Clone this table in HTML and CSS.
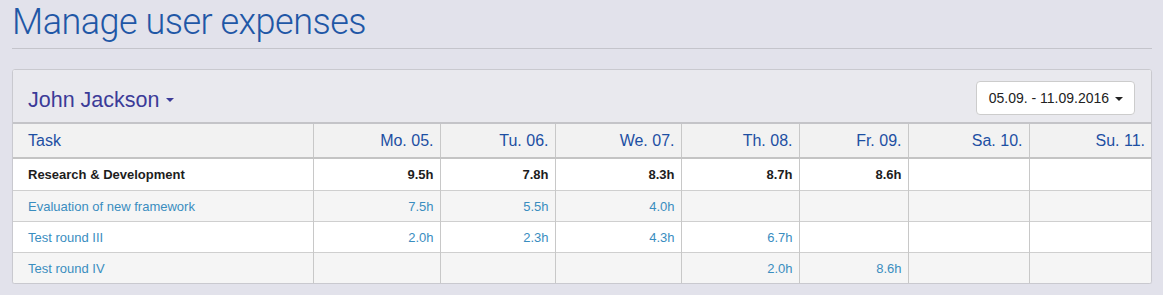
FILE: index.html
```html
<!DOCTYPE html>
<html>
<head>
<meta charset="utf-8">
<link rel="stylesheet" href="styles.css">
</head>
<body>
<div class="page">
  <h1 class="title">Manage user expenses</h1>
  <div class="panel">
    <div class="panel-head">
      <div class="user">John Jackson <span class="caret"></span></div>
      <button class="range">05.09. - 11.09.2016 <span class="caret small"></span></button>
    </div>
    <table class="grid">
      <colgroup>
        <col style="width:300px"><col style="width:127px"><col style="width:115px"><col style="width:126px"><col style="width:118px"><col style="width:109px"><col style="width:121px"><col>
      </colgroup>
      <thead>
        <tr><th class="task">Task</th><th>Mo. 05.</th><th>Tu. 06.</th><th>We. 07.</th><th>Th. 08.</th><th>Fr. 09.</th><th>Sa. 10.</th><th>Su. 11.</th></tr>
      </thead>
      <tbody>
        <tr class="sum"><td class="task">Research &amp; Development</td><td>9.5h</td><td>7.8h</td><td>8.3h</td><td>8.7h</td><td>8.6h</td><td></td><td></td></tr>
        <tr class="alt"><td class="task"><a>Evaluation of new framework</a></td><td><a>7.5h</a></td><td><a>5.5h</a></td><td><a>4.0h</a></td><td></td><td></td><td></td><td></td></tr>
        <tr><td class="task"><a>Test round III</a></td><td><a>2.0h</a></td><td><a>2.3h</a></td><td><a>4.3h</a></td><td><a>6.7h</a></td><td></td><td></td><td></td></tr>
        <tr class="alt"><td class="task"><a>Test round IV</a></td><td></td><td></td><td></td><td><a>2.0h</a></td><td><a>8.6h</a></td><td></td><td></td></tr>
      </tbody>
    </table>
  </div>
</div>
</body>
</html>
```

FILE: styles.css
```css
html, body {
  margin: 0;
  padding: 0;
  background: #e2e2eb;
  font-family: "Liberation Sans", Arial, sans-serif;
}
.page {
  padding: 0 11px 0 12px;
}
.title {
  margin: 0;
  padding: 4px 0 7px 0;
  font-family: Roboto, "Liberation Sans", sans-serif;
  font-weight: 300;
  font-size: 36px;
  line-height: 37px;
  letter-spacing: -0.5px;
  color: #1f57a6;
  border-bottom: 1px solid #c4c4cb;
}
.panel {
  margin-top: 20px;
  background: #fff;
  border: 1px solid #c9c9cf;
  border-radius: 3px;
  overflow: hidden;
  box-shadow: 0 1px 1px rgba(0,0,0,0.05);
}
.panel-head {
  display: flex;
  align-items: center;
  justify-content: space-between;
  height: 52px;
  padding: 0 16px 0 15px;
  background: #e9e9ee;
  border-bottom: 2px solid #c4c4c8;
}
.user {
  font-size: 21.5px;
  color: #3b3b98;
  display: flex;
  align-items: center;
  gap: 7px;
  margin-top: 8px;
}
.caret {
  display: inline-block;
  width: 0;
  height: 0;
  border-left: 4px solid transparent;
  border-right: 4px solid transparent;
  border-top: 4px solid #3b3b98;
}
.caret.small {
  border-top-color: #222;
  margin-left: 2px;
  vertical-align: middle;
}
.range {
  background: #fff;
  border: 1px solid #ccc;
  border-radius: 4px;
  height: 34px;
  padding: 0 11px 0 12px;
  font-family: "Liberation Sans", Arial, sans-serif;
  font-size: 14px;
  color: #222;
  margin-top: 4px;
}
.grid {
  width: 100%;
  border-collapse: collapse;
  table-layout: fixed;
  font-size: 13px;
}
.grid th, .grid td {
  border-left: 1px solid #c8c8c8;
  text-align: right;
  padding: 0 6px 0 8px;
}
.grid th:first-child, .grid td:first-child {
  border-left: none;
}
.grid th {
  background: #f2f2f2;
  height: 32px;
  font-weight: normal;
  font-size: 16px;
  color: #1d4fa3;
  border-bottom: 2px solid #c4c4c4;
  padding-top: 1px;
}
.grid td {
  height: 30px;
  border-top: 1px solid #cfcfcf;
}
.grid tbody tr:first-child td {
  border-top: none;
}
.grid .task {
  text-align: left;
  padding-left: 15px;
}
.grid tr.sum td {
  font-weight: bold;
  color: #1d1d1d;
  height: 31px;
}
.grid tr.alt td {
  background: #f5f5f5;
}
.grid a {
  color: #3a8dbf;
}
```
